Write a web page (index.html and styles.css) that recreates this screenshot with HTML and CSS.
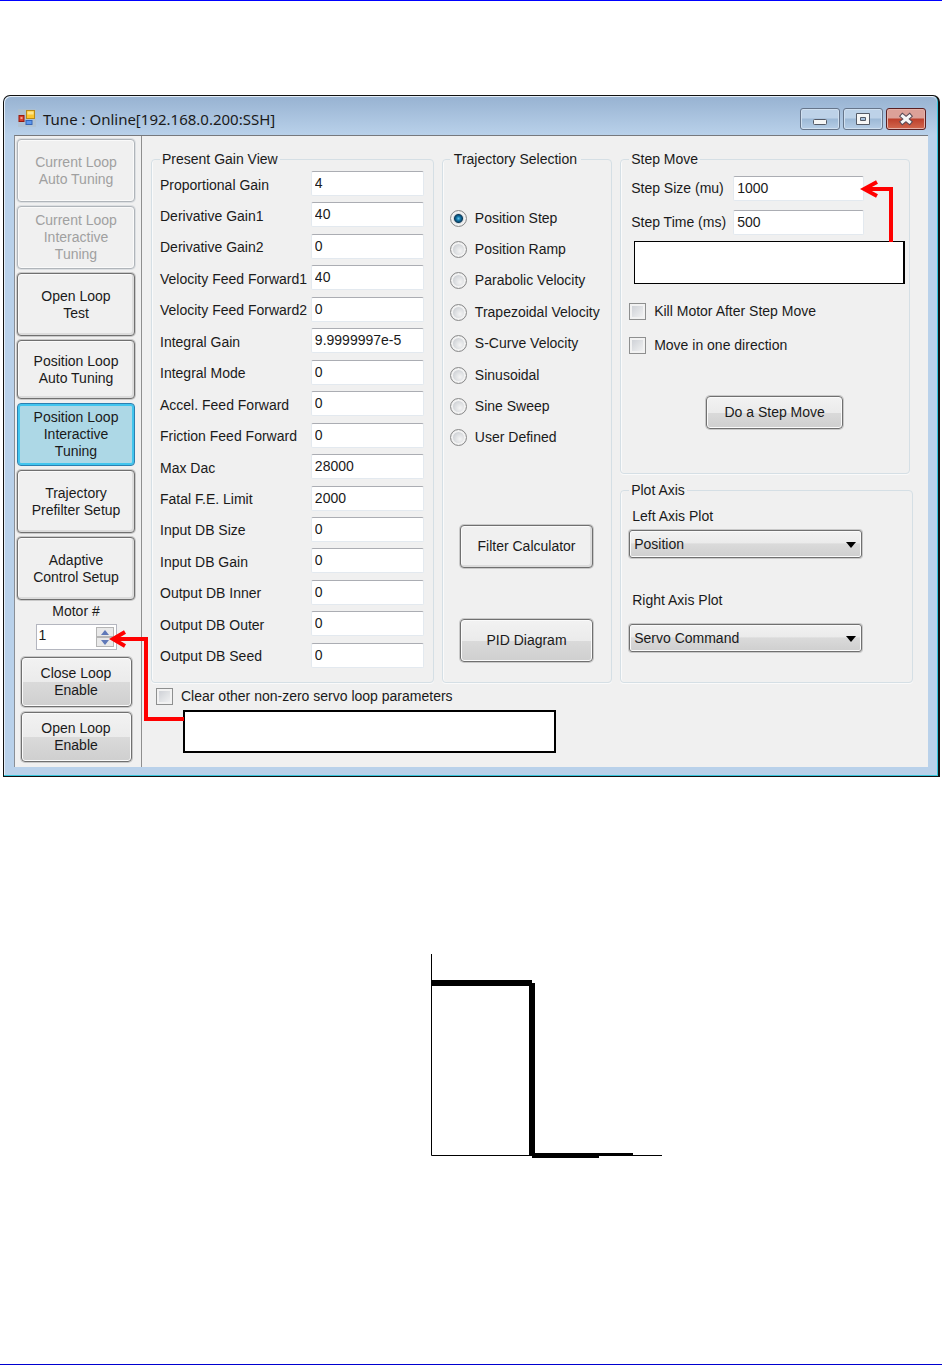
FILE: index.html
```html
<!DOCTYPE html>
<html lang="en">
<head>
<meta charset="utf-8">
<title>Tune : Online[192.168.0.200:SSH]</title>
<link rel="stylesheet" href="styles.css">
</head>
<body class="page">
<section class="window">
  <header class="titlebar">
    <svg class="app-icon" width="18" height="18" viewBox="0 0 18 18" aria-hidden="true">
      <rect x="0" y="0" width="18" height="18" fill="#b3bfca" opacity=".6"/>
      <rect x="8.500" y="1.500" width="8" height="8" fill="#fbc62f" stroke="#b98a17"/>
      <rect x="9.500" y="2.500" width="6" height="3" fill="#fee58c"/>
      <rect x="1" y="6.500" width="5" height="6" fill="#d8402c" stroke="#96190f"/>
      <rect x="2.500" y="8" width="2" height="2" fill="#f3a08f"/>
      <rect x="8" y="11.500" width="6" height="4" fill="#5c97ee" stroke="#3465b6"/>
    </svg>
    <h1 class="title">Tune : Online[192.168.0.200:SSH]</h1>
    <div class="caption-buttons">
      <button class="caption" type="button" aria-label="Minimize"><svg width="16" height="14" viewBox="0 0 16 14"><rect x="1.500" y="7.500" width="13" height="5" rx="1" fill="#f6f6f6" stroke="#545a66"/></svg></button>
      <button class="caption" type="button" aria-label="Maximize"><svg width="16" height="14" viewBox="0 0 16 14"><path d="M1.500 1.500h13v11h-13z M5.500 5.500v3h5v-3z" fill="#f6f6f6" fill-rule="evenodd" stroke="#545a66"/></svg></button>
      <button class="caption close" type="button" aria-label="Close"><svg width="16" height="14" viewBox="0 0 16 14"><path d="M4.500 4l7 6M11.500 4l-7 6" fill="none" stroke="#5a4a55" stroke-width="5" stroke-linecap="square"/><path d="M4.500 4l7 6M11.500 4l-7 6" fill="none" stroke="#f6f6f6" stroke-width="3" stroke-linecap="square"/></svg></button>
    </div>
  </header>
  <div class="client">
    <nav class="sidebar">
      <button class="btn flat" type="button" disabled>Current Loop<br>Auto Tuning</button>
      <button class="btn flat" type="button" disabled>Current Loop<br>Interactive<br>Tuning</button>
      <button class="btn flat" type="button">Open Loop<br>Test</button>
      <button class="btn flat short" type="button">Position Loop<br>Auto Tuning</button>
      <button class="btn flat active" type="button">Position Loop<br>Interactive<br>Tuning</button>
      <button class="btn flat" type="button">Trajectory<br>Prefilter Setup</button>
      <button class="btn flat" type="button">Adaptive<br>Control Setup</button>
      <label class="motor-label" for="motor">Motor #</label>
      <div class="spinner">
        <input id="motor" class="spin-input" type="number" value="1" min="1">
        <div class="spin-buttons">
          <button class="spin" type="button" aria-label="Next motor"><svg width="8" height="5" viewBox="0 0 8 5"><path d="M4 0l4 5H0z" fill="#5f78b8"/></svg></button>
          <button class="spin" type="button" aria-label="Previous motor"><svg width="8" height="5" viewBox="0 0 8 5"><path d="M0 0h8L4 5z" fill="#5f78b8"/></svg></button>
        </div>
      </div>
      <button class="btn loop" type="button">Close Loop<br>Enable</button>
      <button class="btn loop" type="button">Open Loop<br>Enable</button>
    </nav>
    <main class="main">
      <div class="groups">
        <fieldset class="group gain">
          <legend>Present Gain View</legend>
          <div class="gain-rows">
            <label for="g1">Proportional Gain</label><input class="text" id="g1" value="4">
            <label for="g2">Derivative Gain1</label><input class="text" id="g2" value="40">
            <label for="g3">Derivative Gain2</label><input class="text" id="g3" value="0">
            <label for="g4">Velocity Feed Forward1</label><input class="text" id="g4" value="40">
            <label for="g5">Velocity Feed Forward2</label><input class="text" id="g5" value="0">
            <label for="g6">Integral Gain</label><input class="text" id="g6" value="9.9999997e-5">
            <label for="g7">Integral Mode</label><input class="text" id="g7" value="0">
            <label for="g8">Accel. Feed Forward</label><input class="text" id="g8" value="0">
            <label for="g9">Friction Feed Forward</label><input class="text" id="g9" value="0">
            <label for="g10">Max Dac</label><input class="text" id="g10" value="28000">
            <label for="g11">Fatal F.E. Limit</label><input class="text" id="g11" value="2000">
            <label for="g12">Input DB Size</label><input class="text" id="g12" value="0">
            <label for="g13">Input DB Gain</label><input class="text" id="g13" value="0">
            <label for="g14">Output DB Inner</label><input class="text" id="g14" value="0">
            <label for="g15">Output DB Outer</label><input class="text" id="g15" value="0">
            <label for="g16">Output DB Seed</label><input class="text" id="g16" value="0">
          </div>
        </fieldset>
        <fieldset class="group trajectory">
          <legend>Trajectory Selection</legend>
          <div class="radios">
            <label class="choice"><input type="radio" name="traj" checked>Position Step</label>
            <label class="choice"><input type="radio" name="traj">Position Ramp</label>
            <label class="choice"><input type="radio" name="traj">Parabolic Velocity</label>
            <label class="choice"><input type="radio" name="traj">Trapezoidal Velocity</label>
            <label class="choice"><input type="radio" name="traj">S-Curve Velocity</label>
            <label class="choice"><input type="radio" name="traj">Sinusoidal</label>
            <label class="choice"><input type="radio" name="traj">Sine Sweep</label>
            <label class="choice"><input type="radio" name="traj">User Defined</label>
          </div>
          <div class="tools">
            <button class="btn flat" type="button">Filter Calculator</button>
            <button class="btn" type="button">PID Diagram</button>
          </div>
        </fieldset>
        <div class="right-column">
          <fieldset class="group step">
            <legend>Step Move</legend>
            <div class="step-rows">
              <label for="size">Step Size (mu)</label><input class="text" id="size" value="1000">
              <label for="time">Step Time (ms)</label><input class="text" id="time" value="500">
            </div>
            <div class="checks">
              <label class="choice"><input type="checkbox">Kill Motor After Step Move</label>
              <label class="choice"><input type="checkbox">Move in one direction</label>
            </div>
            <button class="btn do-step" type="button">Do a Step Move</button>
            <div class="callout step-callout"></div>
            <svg class="step-arrow" width="36" height="66" viewBox="0 0 36 66" aria-hidden="true"><path d="M31 66V13H4M17 6L4 13l13 7" fill="none" stroke="#f00" stroke-width="4"/></svg>
          </fieldset>
          <fieldset class="group plot">
            <legend>Plot Axis</legend>
            <label for="left">Left Axis Plot</label>
            <div class="combo"><select id="left"><option>Position</option></select></div>
            <label class="second" for="right">Right Axis Plot</label>
            <div class="combo"><select id="right"><option>Servo Command</option></select></div>
          </fieldset>
        </div>
      </div>
      <label class="choice clear"><input type="checkbox">Clear other non-zero servo loop parameters</label>
    </main>
    <div class="callout motor-callout"></div>
    <svg class="motor-arrow" width="76" height="96" viewBox="0 0 76 96" aria-hidden="true"><path d="M76 90H38V10H5M17 3L5 10l12 7" fill="none" stroke="#f00" stroke-width="4"/></svg>
  </div>
</section>
<figure class="plot-figure">
  <svg width="232" height="206" viewBox="0 0 232 206" role="img" aria-label="Step move profile">
    <path d="M1.500 0V201.500H232" fill="none" stroke="#000"/>
    <path d="M2 29H102M102 29V202" fill="none" stroke="#000" stroke-width="6"/>
    <path d="M102 199h101v3h-34v2h-67z"/>
  </svg>
</figure>
</body>
</html>
```
FILE: styles.css
```css
* { box-sizing: border-box; }

.page {
  margin: 0;
  min-height: 100vh;
  display: flex;
  flex-direction: column;
  background: #fff;
  border-top: 1px solid #00f;
  border-bottom: 1px solid #0000d0;
  color: #1a1a1a;
  font: 14px/17px "Liberation Sans", Arial, sans-serif;
}

button, input, select { font: inherit; color: inherit; margin: 0; }

.window {
  margin: 94px 2px 0 3px;
  padding: 0 10px 9px;
  background: #b9d1ea;
  border: 1px solid #111;
  border-right-width: 2px;
  border-radius: 7px 7px 0 0;
  box-shadow: inset -1px -1px 0 #35c5dc, inset 1px 1px 0 #e4eef8;
}

.titlebar {
  display: flex;
  align-items: flex-start;
  gap: 7px;
  height: 38px;
  margin: 1px -9px 0;
  padding: 0 11px 0 13px;
  background: linear-gradient(#98b3d2, #b9d1ea);
  border-radius: 6px 6px 0 0;
}
.app-icon { margin-top: 12px; }
.title {
  margin: 12px 0 0;
  flex: 1;
  font: 15px/20px "Noto Sans", sans-serif;
}
.caption-buttons { display: flex; gap: 3px; margin-top: 11px; }
.caption {
  display: grid;
  place-items: center;
  width: 40px;
  height: 22px;
  padding: 0;
  border: 1px solid #66758a;
  border-radius: 3px;
  background: linear-gradient(#bdd2e8 45%, #9db9d6 50%, #b6cde6);
  box-shadow: inset 0 0 0 1px #d0e0f0;
}
.caption.close {
  border-color: #5a1f22;
  background: linear-gradient(#dca198 45%, #bd402c 50%, #d2684f);
  box-shadow: inset 0 0 0 1px #e5b3aa;
}

.client {
  position: relative;
  display: flex;
  background: #f0f0f0;
  border-top: 1px solid #77797d;
  border-left: 1px solid #8a8f96;
}

.sidebar {
  flex: none;
  width: 127px;
  padding: 3px 6px 5px 2px;
  display: flex;
  flex-direction: column;
  align-items: center;
  gap: 4px;
  border-right: 1px solid #8e8e8e;
}
.btn {
  padding: 0;
  border: 1px solid #707070;
  border-radius: 4px;
  background: linear-gradient(#f2f2f2, #ebebeb 50%, #dadada 50%, #cfcfcf);
  box-shadow: inset 0 0 0 1px #fafafa, 0 0 0 1px #c9c9c9;
}
.btn.flat { background: #f0f0f0; box-shadow: inset -1px -1px 0 1px #dcdcdc, inset 0 0 0 1px #fafafa, 0 0 0 1px #c9c9c9; }
.btn.flat:disabled { color: #a0a0a0; border-color: #b0b5ba; box-shadow: inset 0 0 0 1px #fafafa, 0 0 0 1px #dcdfe2; }
.btn.active { background: #add8e6; border-color: #2c7fb0; box-shadow: inset 0 0 0 2px #42c5ee; }
.sidebar .flat { width: 100%; height: 63px; }
.sidebar .short { height: 59px; }
.motor-label { margin-top: -1px; }
.spinner {
  display: flex;
  width: 81px;
  height: 26px;
  margin-bottom: 2px;
  padding: 2px;
  background: #fff;
  border: 1px solid #b4b6bf;
}
.spin-input {
  flex: 1;
  min-width: 0;
  padding: 0 0 4px;
  border: 0;
  background: none;
  appearance: textfield;
}
.spin-input::-webkit-inner-spin-button { display: none; }
.spin-buttons { display: grid; width: 18px; }
.spin {
  display: grid;
  place-items: center;
  padding: 0;
  border: 1px solid #b5b5b5;
  background: #e9e9e9;
}
.loop { width: 111px; height: 50px; margin-top: 1px; }

.main { flex: 1; min-width: 0; padding: 14px 15px 58px 9px; }
.groups { display: grid; grid-template-columns: 284fr 171fr 294fr; gap: 8px; }
.group {
  position: relative;
  min-width: 0;
  margin: 0;
  border: 1px solid #d5dfe5;
  border-radius: 4px;
  box-shadow: inset 1px 0 0 #fafafa, 0 1px 0 #fafafa;
}
.group legend { line-height: 18px; padding: 0 2px; }
.gain { padding: 3px 9px 14px 8px; }
.gain-rows {
  display: grid;
  grid-template-columns: 1fr 113px;
  grid-auto-rows: 25px;
  align-content: space-between;
  align-items: center;
  height: 497px;
}
.gain-rows label { white-space: nowrap; padding-top: 3px; }
.text {
  width: 100%;
  height: 25px;
  padding: 0 3px 1px;
  border: 1px solid #e3e9ef;
  border-top-color: #abadb3;
  border-radius: 2px;
  background: #fff;
}
.trajectory { padding: 40px 6px 17px 7px; }
.trajectory legend { padding: 0 4px; }
.radios { display: grid; grid-auto-rows: 20px; align-content: space-between; height: 240px; }
.choice { display: flex; align-items: center; gap: 8px; white-space: nowrap; }
.choice input { flex: none; appearance: none; }
.choice input[type="radio"] {
  width: 17px;
  height: 17px;
  border: 1px solid #8a8a8a;
  border-radius: 50%;
  background: radial-gradient(circle at 60% 60%, #f4f4f4, #cfd2d6 60%);
  box-shadow: inset 0 0 0 2px #f2f2f2;
}
.choice input[type="radio"]:checked {
  background: radial-gradient(circle at 50% 50%, #5fc0e8 0, #1377aa 2px, #0b3a5a 4px, #d5d9dc 5px);
}
.choice input[type="checkbox"] {
  width: 17px;
  height: 17px;
  border: 1px solid #8e8f8f;
  background: linear-gradient(135deg, #c9ccd2, #f6f6f6);
  box-shadow: inset 0 0 0 2px #f2f2f2;
}
.tools { display: grid; gap: 51px; margin-top: 77px; padding: 0 12px 0 10px; }
.tools .btn { height: 43px; }

.right-column { display: flex; flex-direction: column; gap: 7px; }
.step { margin-right: 3px; padding: 8px 8px 44px; }
.step-rows {
  display: grid;
  grid-template-columns: 102px 131px;
  gap: 9px 0;
  align-items: center;
  padding-left: 2px;
}
.checks { display: grid; gap: 14px; margin-top: 66px; }
.checks .choice { height: 20px; }
.do-step { display: block; width: 137px; height: 33px; margin: 41px 0 0 77px; }
.callout { position: absolute; background: #fff; border: 1px solid #000; border-right-width: 2px; }
.step-callout { left: 13px; top: 73px; width: 271px; height: 43px; }
.step-arrow { position: absolute; left: 239px; top: 8px; }
.motor-callout { left: 168px; top: 574px; width: 373px; height: 43px; border-width: 2px; }
.motor-arrow { position: absolute; left: 93px; top: 493px; }

.plot { flex: 1; padding: 9px 8px 28px; display: flex; flex-direction: column; align-items: flex-start; }
.plot label { padding-left: 3px; }
.plot .second { margin-top: 34px; margin-bottom: 10px; }
.combo { position: relative; width: 233px; margin-top: 5px; }
.combo select {
  display: block;
  width: 100%;
  height: 28px;
  padding: 0 24px 0 4px;
  appearance: none;
  border: 1px solid #707070;
  border-radius: 3px;
  background: linear-gradient(#f2f2f2, #ebebeb 45%, #dadada 50%, #cfcfcf);
  box-shadow: inset 0 0 0 1px #fafafa, 0 0 0 1px #c9c9c9;
}
.combo::after {
  content: "";
  position: absolute;
  right: 6px;
  top: 12px;
  border: 5px solid transparent;
  border-top: 6px solid #000;
  border-bottom: 0;
  pointer-events: none;
}
.clear { margin: 5px 0 0 5px; }

.plot-figure { margin: 177px 0 0 430px; }
.plot-figure svg { display: block; }
```
